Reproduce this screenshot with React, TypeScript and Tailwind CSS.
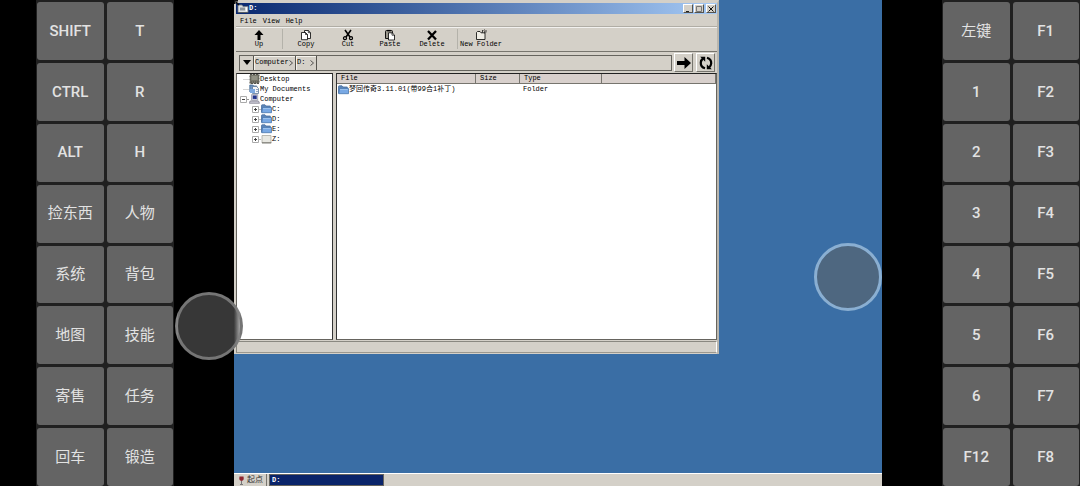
import type { ReactNode } from "react";

const leftKeys = [
  "SHIFT", "T", "CTRL", "R", "ALT", "H", "捡东西", "人物",
  "系统", "背包", "地图", "技能", "寄售", "任务", "回车", "锻造",
];
const rightKeys = [
  "左键", "F1", "1", "F2", "2", "F3", "3", "F4",
  "4", "F5", "5", "F6", "6", "F7", "F12", "F8",
];

function KeyPad({ keys, label }: { keys: string[]; label: string }) {
  return (
    <section
      aria-label={label}
      className="grid w-[138px] shrink-0 grid-cols-2 grid-rows-8 gap-[3px] bg-[#202020] px-px pt-0.5"
    >
      {keys.map((k) => (
        <button
          key={k}
          className="flex items-center justify-center rounded-[3px] bg-[#646464] font-['Roboto','Noto_Sans_CJK_SC',sans-serif] text-[15px] text-[#e2e2e2]"
        >
          <span className={/^[\x20-\x7e]+$/.test(k) ? "font-medium" : "font-normal"}>{k}</span>
        </button>
      ))}
    </section>
  );
}

function FolderIcon({ blue = true }: { blue?: boolean }) {
  return (
    <svg viewBox="0 0 11 10" className="h-[10px] w-[11px] shrink-0" aria-hidden="true">
      {blue ? (
        <>
          <path d="M.5 8.5V1.5Q.5.8 1.2.8H4l1 1.2h4.3v2" fill="#5d86b8" stroke="#4a6f9f" strokeWidth=".8" />
          <path d="M1.5 3.5h9v5.2H.8z" fill="#79a9e4" stroke="#4977ae" strokeWidth=".8" />
          <path d="M2 4.4h7.6" stroke="#b2d0f2" strokeWidth=".7" />
        </>
      ) : (
        <>
          <path d="M1 1.5h9v7.5H1z" fill="#e8e8e2" stroke="#aaa9a2" strokeWidth=".8" />
          <path d="M1 8.8h9.3" stroke="#77766e" strokeWidth="1" />
        </>
      )}
    </svg>
  );
}

function DesktopIcon() {
  return (
    <svg viewBox="0 0 11 10" className="h-[10px] w-[11px] shrink-0" aria-hidden="true">
      <path d="M1 .5h9v9H1z" fill="#77776b" stroke="#55554e" strokeDasharray="2 1" />
      <path d="M2.5 2h6v4h-6z" fill="#919184" />
      <path d="M2 8h7" stroke="#51514a" strokeDasharray="1 1" />
    </svg>
  );
}

function DocumentsIcon() {
  return (
    <svg viewBox="0 0 11 10" className="h-[10px] w-[11px] shrink-0" aria-hidden="true">
      <path d="M.8 8V1h3l1 1h3v2" fill="#6d94c4" stroke="#45698f" strokeWidth=".8" />
      <path d="M3.5 2.5h4l2 2v5h-6z" fill="#f3f5f8" stroke="#5c7899" strokeWidth=".8" />
      <path d="M1 5h5v4H1z" fill="#7eaae0" />
      <path d="M7 5.5h2M7 7.5h2" stroke="#6b86aa" strokeWidth=".7" />
    </svg>
  );
}

function ComputerIcon() {
  return (
    <svg viewBox="0 0 11 10" className="h-[10px] w-[11px] shrink-0" aria-hidden="true">
      <path d="M2.5.6h6.2v5.6H2.5z" fill="#d9dbe6" stroke="#8f90a0" strokeWidth=".7" />
      <path d="M3.7 1.5h4v3.4h-4z" fill="#22348c" />
      <path d="M1 7h8.5l1 2.3H.4z" fill="#c8c6d3" stroke="#7d7b8b" strokeWidth=".7" />
    </svg>
  );
}

function TitleIcon() {
  return (
    <svg viewBox="0 0 13 11" className="h-[11px] w-[13px] shrink-0" aria-hidden="true">
      <path d="M2 2h4l1 1.500h5v6H2z" fill="#dfe1e2" stroke="#757b82" strokeWidth=".8" />
      <path d="M4 4.500h5v3H4z" fill="#8c949c" />
      <path d="M10.500 4.500v3.500" stroke="#fff" />
      <path d="M2 9.500h10" stroke="#555b62" />
    </svg>
  );
}

function PointerMark() {
  return (
    <svg viewBox="0 0 6 6" className="absolute top-0 left-0 size-1.5" aria-hidden="true">
      <path d="M0 0h4v1.500H1.500V4H0z" fill="#111" />
      <path d="m2 2 3 3" stroke="#111" strokeWidth="1.500" />
    </svg>
  );
}

function Chevron() {
  return (
    <svg viewBox="0 0 4 6" className="h-1.5 w-1 shrink-0" fill="none" stroke="#333" strokeWidth=".8" aria-hidden="true">
      <path d="m.5.5 3 2.5-3 2.5" />
    </svg>
  );
}

function Tool({ label, children }: { label: string; children: ReactNode }) {
  return (
    <button className="flex min-w-[42px] flex-col items-center">
      <svg viewBox="0 0 12 12" className="size-[12px]" fill="none" stroke="#000" aria-hidden="true">
        {children}
      </svg>
      <span className="text-[7px] leading-[7px] whitespace-nowrap">{label}</span>
    </button>
  );
}

function Toolbar() {
  return (
    <div className="flex h-[24px] items-center border-t border-white/70 pb-0.5 pl-0.5">
      <Tool label="Up">
        <path d="M6 1 10.5 6H7.5v5h-3V6h-3z" fill="#000" stroke="none" />
      </Tool>
      <div className="ml-[2px] h-5 w-px bg-[#b4b2aa]" />
      <div className="ml-[2px] flex">
        <Tool label="Copy">
          <path d="M4.5 1.5h3.8l2.2 2.2v5.8h-6z" fill="#fff" strokeWidth=".8" />
          <path d="M1.5 3.5h4l2 2v5.2h-6z" fill="#fff" strokeWidth=".8" />
          <path d="M5.5 3.5v2h2M8.3 1.5v2.2h2.2" strokeWidth=".7" />
        </Tool>
        <Tool label="Cut">
          <path d="M3 1 8 8M9 1 4 8" strokeWidth="1.6" />
          <circle cx="3" cy="9.2" r="1.5" strokeWidth="1.3" />
          <circle cx="9" cy="9.2" r="1.5" strokeWidth="1.3" />
        </Tool>
        <Tool label="Paste">
          <path d="M1.5 2.5Q1.5 1.5 2.5 1.5h5q1 0 1 1v7h-7z" fill="#99968c" strokeWidth=".9" />
          <path d="M3.2 1.6h3.4" strokeWidth="1.4" />
          <path d="M4.5 3.8h3.7L10.5 6v5h-6z" fill="#fff" strokeWidth=".8" />
          <path d="M8 4v2.2h2.3" strokeWidth=".7" />
        </Tool>
        <Tool label="Delete">
          <path d="M2 2 10 10.500M10 2 2 10.500" strokeWidth="2.300" />
        </Tool>
      </div>
      <div className="ml-[4px] h-5 w-px bg-[#b4b2aa]" />
      <div className="ml-[2px]">
        <Tool label="New Folder">
          <path d="M1.5 10.5v-7l1-1H5l1 1.3h4v6.7z" fill="#efede5" strokeWidth=".8" />
          <path d="M7.500 1v2.500M9.500.5q-1 1 0 1.800t0 2M11 1v2.500" strokeWidth=".7" />
        </Tool>
      </div>
    </div>
  );
}

const crumb =
  "flex h-full shrink-0 items-center justify-between border-r border-[#55534d] pr-0.5 pl-px shadow-[inset_1px_1px_0_#f5f3ec]";
const squareButton =
  "flex size-[19px] shrink-0 items-center justify-center border border-t-white border-l-white border-r-[#77756e] border-b-[#77756e]";

function AddressBar() {
  return (
    <div className="flex h-[22px] items-center gap-0.5 border-t border-[#77756e] pr-[2px] pl-[3px]">
      <nav aria-label="Path" className="flex h-4 grow items-stretch border border-[#66645e]">
        <button aria-label="History" className="flex w-[14px] items-center justify-center border-r border-[#55534d]">
          <svg viewBox="0 0 8 5" className="h-[5px] w-2">
            <path d="M0 0h8L4 5z" />
          </svg>
        </button>
        <button className={`${crumb} w-[42px]`}>
          Computer
          <Chevron />
        </button>
        <button className={`${crumb} w-[21px]`}>
          D:
          <Chevron />
        </button>
      </nav>
      <button aria-label="Go" className={squareButton}>
        <svg viewBox="0 0 14 12" className="h-3 w-3.5">
          <path d="M0 4h7.5V0L14 6l-6.5 6V8H0z" />
        </svg>
      </button>
      <button aria-label="Refresh" className={`${squareButton} ml-px`}>
        <svg viewBox="0 0 14 14" className="size-3.5" fill="none" stroke="#000" strokeWidth="2.2">
          <path d="M6 12.3Q1.5 11 1.8 6.5 2 4 4 2.5" />
          <path d="M8 1.7Q12.5 3 12.2 7.5 12 10 10 11.5" />
          <path d="M1.2.8h5v5zM12.8 13.2h-5v-5z" fill="#000" stroke="none" />
        </svg>
      </button>
    </div>
  );
}

function Toggle({ open = false }: { open?: boolean }) {
  return (
    <svg viewBox="0 0 7 7" className="size-[7px] shrink-0" fill="none" aria-hidden="true">
      <path d="M.5.5h6v6h-6z" fill="#fff" stroke="#aaa" />
      <path d={open ? "M2 3.5h3" : "M2 3.5h3M3.5 2v3"} stroke="#444" />
    </svg>
  );
}

function TreePane() {
  return (
    <ul className="w-[97px] shrink-0 overflow-hidden border border-t-[#222] border-r-[#333] border-b-[#66645e] border-l-[#66645e] bg-white">
      <li className="flex h-[10px] items-center pl-[6px]">
        <span className="h-px w-1.5 bg-[#d5d5d5]" /><DesktopIcon />Desktop
      </li>
      <li className="flex h-[10px] items-center pl-[6px]">
        <span className="h-px w-1.5 bg-[#d5d5d5]" /><DocumentsIcon />My Documents
      </li>
      <li>
        <div className="flex h-[10px] items-center pl-[3px]">
          <Toggle open /><span className="h-px w-0.5 bg-[#999]" /><ComputerIcon />Computer
        </div>
        <ul className="pl-[15px]">
          {["C:", "D:", "E:", "Z:"].map((d) => (
            <li key={d} className="flex h-[10px] items-center">
              <Toggle /><span className="h-px w-0.5 bg-[#bbb]" />
              <FolderIcon blue={d !== "Z:"} />{d}
            </li>
          ))}
        </ul>
      </li>
    </ul>
  );
}

const th = "h-[10px] border-r border-b border-[#77756e] bg-[#d8d0cc] p-0 pl-1 text-left font-normal leading-[9px]";

function FilePane() {
  return (
    <div className="grow overflow-hidden border border-t-[#222] border-r-[#66645e] border-b-[#66645e] border-l-[#333] bg-white">
      <table className="w-full table-fixed border-separate border-spacing-0">
        <thead>
          <tr>
            <th className={`${th} w-[139px]`}>File</th>
            <th className={`${th} w-[44px]`}>Size</th>
            <th className={`${th} w-[82px]`}>Type</th>
            <th className={th} aria-label="Other" />
          </tr>
        </thead>
        <tbody>
          <tr>
            <td className="p-0">
              <div className="flex h-[11px] items-center pl-px whitespace-nowrap">
                <FolderIcon />梦回传奇3.11.01(带99合1补丁)
              </div>
            </td>
            <td className="p-0" />
            <td className="p-0 pl-[3px]">Folder</td>
            <td className="p-0" />
          </tr>
        </tbody>
      </table>
    </div>
  );
}

const captionButton =
  "flex h-[9px] w-[10px] items-center justify-center border border-t-white border-l-white border-r-[#55534d] border-b-[#55534d] bg-[#d4d0c8]";

function ExplorerWindow() {
  return (
    <main className="flex h-[354px] w-[485px] max-w-full flex-col border-x-2 border-t-[3px] border-[#d4d0c8] border-r-[#b9b6ae] bg-[#d4d0c8]">
      <header className="flex h-[11px] shrink-0 items-center bg-linear-to-r from-[#0a2870] to-[#a6caf5] text-white">
        <TitleIcon />
        <h1 className="font-bold">D:</h1>
        <div className="ml-auto flex gap-px pr-px">
          <button aria-label="Minimize" className={captionButton}>
            <svg viewBox="0 0 6 6" className="size-1.5" stroke="#222"><path d="M1 5.5h3" /></svg>
          </button>
          <button aria-label="Maximize" className={captionButton}>
            <svg viewBox="0 0 6 6" className="size-1.5" fill="none" stroke="#777"><path d="M.5.5h5v5h-5z" /></svg>
          </button>
          <button aria-label="Close" className={`${captionButton} ml-px`}>
            <svg viewBox="0 0 6 6" className="size-1.5" stroke="#111"><path d="m.5.5 5 5M5.5.5l-5 5" /></svg>
          </button>
        </div>
      </header>
      <nav aria-label="Menu" className="flex h-[13px] shrink-0 items-center gap-1.5 border-b border-[#b0ada5] pt-0.5 pl-1">
        <button>File</button>
        <button>View</button>
        <button>Help</button>
      </nav>
      <Toolbar />
      <AddressBar />
      <div className="flex min-h-0 grow gap-[3px]">
        <TreePane />
        <FilePane />
      </div>
      <footer className="my-px h-[12px] shrink-0 border border-t-[#8a8880] border-l-[#8a8880] border-r-white border-b-[#9b988f]" />
    </main>
  );
}

function Taskbar() {
  return (
    <footer className="mt-auto flex h-[13px] shrink-0 items-stretch gap-0.5 border-t border-white bg-[#d4d0c8]">
      <button className="flex w-[33px] items-center gap-0.5 border-r border-[#77756e] pl-1 text-[8px] leading-none text-[#333]">
        <svg viewBox="0 0 7 9" className="h-[9px] w-[7px]" aria-hidden="true">
          <path d="M1.5.5h4Q6.500 4.500 3.500 5 .5 4.500 1.500.5z" fill="#8e2630" />
          <path d="M3.5 5v3M2 8.5h3" stroke="#777" />
        </svg>
        起点
      </button>
      <button className="w-[115px] border border-[#66645e] bg-[#0a246a] pl-0.5 text-left font-bold leading-[9px] text-white">
        D:
      </button>
    </footer>
  );
}

const stick = "absolute size-[68px] rounded-full border-[3px]";

export default function App() {
  return (
    <div className="flex h-screen min-h-[400px] overflow-hidden bg-black pl-9">
      <KeyPad keys={leftKeys} label="Left keys" />
      <div className="relative mx-[60px] flex min-w-0 grow flex-col bg-[#3a6ea5] font-['Liberation_Mono','Noto_Sans_CJK_SC',monospace] text-[7px] leading-[9px] text-black">
        <ExplorerWindow />
        <Taskbar />
        <PointerMark />
        <button
          aria-label="Left stick"
          className={`${stick} top-[292px] -left-[59px] border-[#808080]/85 bg-linear-to-r from-[#373737] from-90% to-[#aaa]`}
        />
        <button aria-label="Right stick" className={`${stick} top-[243px] right-0 border-[#8aafd2] bg-[#4e6780]`} />
      </div>
      <KeyPad keys={rightKeys} label="Right keys" />
    </div>
  );
}
